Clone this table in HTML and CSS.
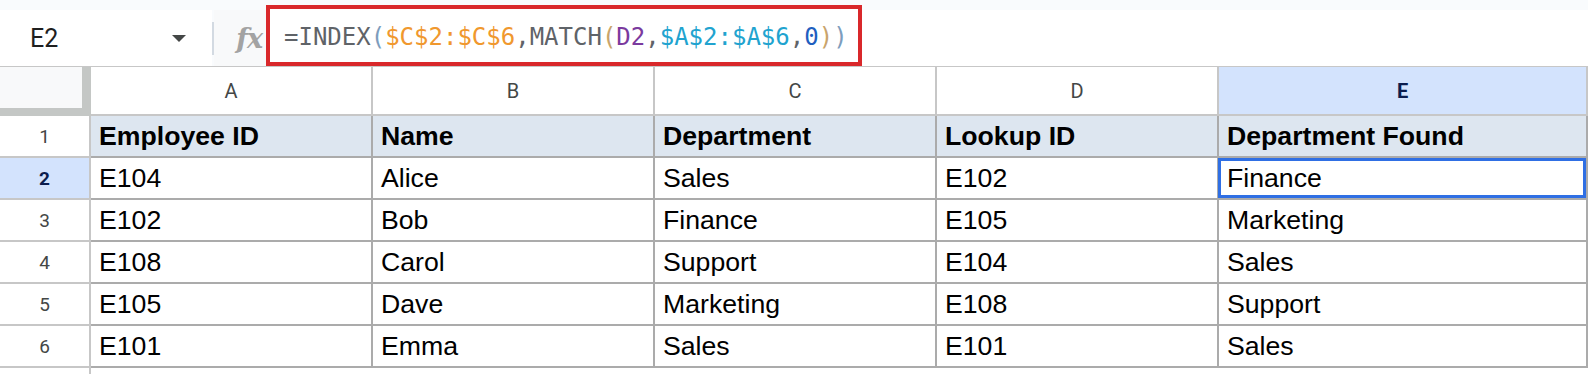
FILE: index.html
```html
<!DOCTYPE html>
<html>
<head>
<meta charset="utf-8">
<link rel="stylesheet" href="styles.css">
</head>
<body>
<div class="top">
  <div class="namebox"><span class="ref">E2</span><span class="caret"></span></div>
  <div class="sep"></div>
  <div class="fxcell"><span class="fx">fx</span></div>
  <div class="formula"><span class="f-op">=INDEX</span><span class="f-p1">(</span><span class="f-c">$C$2:$C$6</span><span class="f-op">,MATCH</span><span class="f-p2">(</span><span class="f-d">D2</span><span class="f-op">,</span><span class="f-a">$A$2:$A$6</span><span class="f-op">,</span><span class="f-n">0</span><span class="f-p2">)</span><span class="f-p1">)</span></div>
  <div class="rest"></div>
</div>
<div class="grid">
  <div class="corner"></div>
  <div class="colhead">A</div>
  <div class="colhead">B</div>
  <div class="colhead">C</div>
  <div class="colhead">D</div>
  <div class="colhead active">E</div>

  <div class="rowhead">1</div>
  <div class="cell hdr">Employee ID</div>
  <div class="cell hdr">Name</div>
  <div class="cell hdr">Department</div>
  <div class="cell hdr">Lookup ID</div>
  <div class="cell hdr">Department Found</div>

  <div class="rowhead active">2</div>
  <div class="cell">E104</div>
  <div class="cell">Alice</div>
  <div class="cell">Sales</div>
  <div class="cell">E102</div>
  <div class="cell sel">Finance</div>

  <div class="rowhead">3</div>
  <div class="cell">E102</div>
  <div class="cell">Bob</div>
  <div class="cell">Finance</div>
  <div class="cell">E105</div>
  <div class="cell">Marketing</div>

  <div class="rowhead">4</div>
  <div class="cell">E108</div>
  <div class="cell">Carol</div>
  <div class="cell">Support</div>
  <div class="cell">E104</div>
  <div class="cell">Sales</div>

  <div class="rowhead">5</div>
  <div class="cell">E105</div>
  <div class="cell">Dave</div>
  <div class="cell">Marketing</div>
  <div class="cell">E108</div>
  <div class="cell">Support</div>

  <div class="rowhead">6</div>
  <div class="cell">E101</div>
  <div class="cell">Emma</div>
  <div class="cell">Sales</div>
  <div class="cell">E101</div>
  <div class="cell">Sales</div>

  <div class="rowhead last"></div>
  <div class="empty"></div>
  <div class="empty"></div>
  <div class="empty"></div>
  <div class="empty"></div>
  <div class="empty"></div>
</div>
</body>
</html>
```
FILE: styles.css
```css
html, body {
  margin: 0;
  padding: 0;
}
body {
  width: 1588px;
  height: 374px;
  overflow: hidden;
  background: #fff;
  font-family: "Liberation Sans", Arial, sans-serif;
}
* { box-sizing: border-box; }

.top {
  display: flex;
  height: 67px;
  padding-top: 10px;
  background: #f9fbfd;
  border-bottom: 1px solid #c7c7c7;
}
.namebox {
  width: 212px;
  height: 56px;
  background: #fff;
  display: flex;
  align-items: center;
  justify-content: space-between;
  padding: 0 26px 0 30px;
}
.ref {
  font-family: Roboto, "Liberation Sans", sans-serif;
  font-size: 25px;
  color: #1f1f1f;
}
.caret {
  width: 0;
  height: 0;
  border-left: 7px solid transparent;
  border-right: 7px solid transparent;
  border-top: 7px solid #444746;
}
.sep {
  width: 2px;
  height: 33px;
  margin-top: 12px;
  background: #d3dae2;
}
.fxcell {
  width: 52px;
  height: 56px;
  background: #f8f9fa;
  display: flex;
  align-items: center;
  justify-content: flex-end;
  padding-right: 4px;
}
.fx {
  font-family: "DejaVu Serif", serif;
  font-style: italic;
  font-weight: bold;
  font-size: 27px;
  color: #a3a3a3;
  letter-spacing: -1px;
}
.formula {
  width: 596px;
  height: 61px;
  margin-top: -5px;
  border: 4px solid #d9282b;
  background: #fff;
  display: flex;
  align-items: center;
  padding-left: 14px;
  padding-top: 2px;
  font-family: "DejaVu Sans Mono", "Liberation Mono", monospace;
  font-size: 24px;
  white-space: pre;
}
.f-op { color: #5f6368; }
.f-p1 { color: #7d9dbd; }
.f-p2 { color: #c9a46b; }
.f-c { color: #f0982e; }
.f-d { color: #7b3a9e; }
.f-a { color: #21a3cf; }
.f-n { color: #1f5fbf; }
.rest {
  flex: 1;
  height: 56px;
  background: #fff;
}

.grid {
  display: grid;
  grid-template-columns: 91px 282px 282px 282px 282px 1fr;
  grid-template-rows: 49px repeat(6, 42px) 12px;
}
.corner {
  background: #f8f9fa;
  border-right: 9px solid #c4c7c5;
  border-bottom: 8px solid #c4c7c5;
}
.colhead {
  display: flex;
  align-items: center;
  justify-content: center;
  font-family: Roboto, "Liberation Sans", sans-serif;
  font-size: 20px;
  color: #444746;
  border-right: 2px solid #c7c7c7;
  border-bottom: 2px solid #c7c7c7;
}
.colhead.active {
  background: #d3e3fd;
  color: #0b1d4d;
  font-weight: bold;
}
.rowhead {
  display: flex;
  align-items: center;
  justify-content: center;
  font-family: Roboto, "Liberation Sans", sans-serif;
  font-size: 19px;
  color: #444746;
  border-right: 2px solid #c7c7c7;
  border-bottom: 2px solid #c7c7c7;
}
.rowhead.active {
  background: #d3e3fd;
  color: #0b1d4d;
  font-weight: bold;
}
.rowhead.last {
  border-bottom: none;
}
.cell {
  position: relative;
  display: flex;
  align-items: center;
  padding: 0 8px;
  font-size: 26.67px;
  color: #000;
  white-space: nowrap;
  border-right: 2px solid #ababab;
  border-bottom: 2px solid #ababab;
}
.cell.hdr {
  background: #dde6f0;
  font-weight: bold;
}
.cell.sel::after {
  content: "";
  position: absolute;
  top: 0;
  left: -1px;
  right: 0;
  bottom: 0;
  border: 3px solid #2f6fe4;
}
.empty {
  background: #fff;
}
```
